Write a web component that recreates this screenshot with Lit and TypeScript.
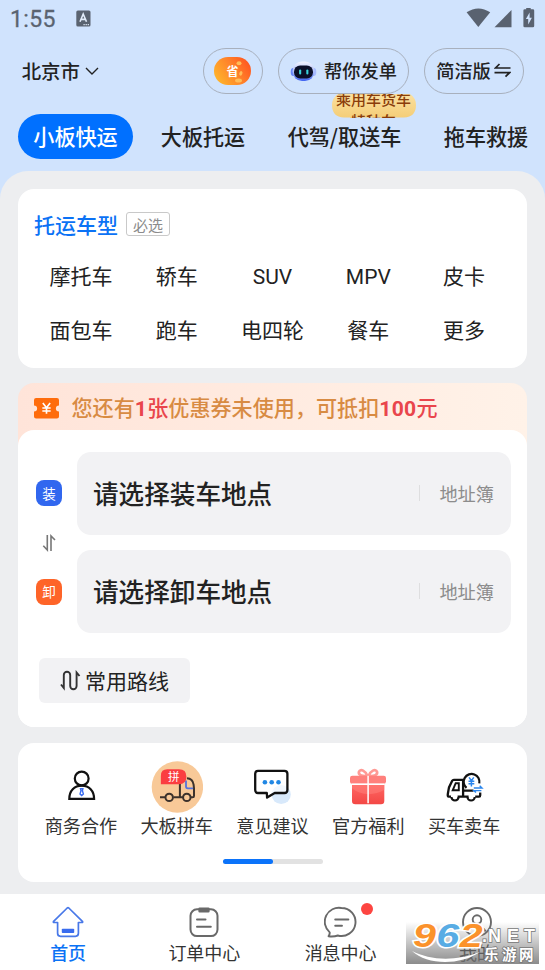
import { LitElement, html, css } from "lit";
import { customElement } from "lit/decorators.js";
import { classMap } from "lit/directives/class-map.js";

const VEHICLES = ["摩托车", "轿车", "SUV", "MPV", "皮卡", "面包车", "跑车", "电四轮", "餐车", "更多"];

const personIcon = html`<svg width="52" height="52" viewBox="-.7 0 52 52" fill="none">
  <circle cx="26" cy="17.500" r="6.900" stroke="#111" stroke-width="2.200"/>
  <path d="M13.600 37.900c0-8.200 5-13.200 12.400-13.200s12.400 5 12.400 13.200z" stroke="#111" stroke-width="2.200"/>
  <path d="M24.800 27.800h2.400l-.5 2 1 3.200-1.700 1.600-1.700-1.600 1-3.200z" stroke="#3b6df0" stroke-width="1.400"/>
</svg>`;

const carpoolIcon = html`<svg width="52" height="52" viewBox="-.4 0 52 52" fill="none">
  <circle cx="26" cy="26" r="25.700" fill="#f8c998"/>
  <path d="M8.600 36.300h5M22 36.300h9.600M28.500 22v14M35.500 17.200c4 .2 6.200 2.600 6.700 6.400l.4 3.800v7.500q0 1.400-1.400 1.400h-1.700" stroke="#3c322c" stroke-width="2"/>
  <path d="M34.600 19.500v6.100q0 1.700 1.700 1.700h5.400" stroke="#5673dc" stroke-width="1.800"/>
  <circle cx="17.800" cy="36.400" r="3.700" stroke="#3c322c" stroke-width="2"/>
  <circle cx="35.400" cy="36.400" r="3.700" stroke="#3c322c" stroke-width="2"/>
  <path d="M9.500 23.200V14.700q0-6.400 6.400-6.400h11.700q7.400 0 7.400 7.400t-7.400 7.500z" fill="#fb3d41"/>
  <text class="badge-text" x="22.300" y="19.800" text-anchor="middle" font-size="11.500" fill="#fff">拼</text>
</svg>`;

const feedbackIcon = html`<svg width="52" height="52" viewBox="0 0 52 52" fill="none">
  <circle cx="35.200" cy="33.500" r="9.600" fill="#d8e9fb"/>
  <path d="M12 9.800h26.400q3 0 3 3v16.200q0 3-3 3H28.700l-7.600 4.600-.3-4.600H12q-2.800 0-2.800-3V12.800q0-3 2.800-3z" fill="#fff" fill-opacity=".65" stroke="#111" stroke-width="2.300" stroke-linejoin="round"/>
  <circle cx="18.900" cy="21.200" r="2.300" fill="#2087e4"/><circle cx="25.700" cy="21.200" r="2.300" fill="#2087e4"/><circle cx="32.500" cy="21.200" r="2.300" fill="#2087e4"/>
</svg>`;

const giftIcon = html`<svg width="52" height="52" viewBox="0 .7 52 52" fill="none">
  <defs><linearGradient id="gift" x1="0" y1="0" x2="0" y2="1"><stop stop-color="#ff6663"/><stop offset="1" stop-color="#f34845"/></linearGradient></defs>
  <path d="M25.500 15.800c-6.500.4-9.400-1.400-8.500-4.400 1.500-3.400 6.600-1 8.500 4.400zm1 0c6.500.4 9.400-1.400 8.500-4.400-1.500-3.400-6.600-1-8.500 4.400z" stroke="#ff9a95" stroke-width="2.700"/>
  <rect x="8" y="15.400" width="36" height="8" rx="2.200" fill="#ff807c"/>
  <path d="M10 24.500h32.300v16.200q0 3.300-3.300 3.300H13.300q-3.300 0-3.300-3.300z" fill="url(#gift)"/>
  <path d="M10 28c8 7 22 8 32.300 1.500V24.500H10z" fill="#ff817c" opacity=".5"/>
  <path d="M26.100 15.500V43M10 24h32.300" stroke="#fff" stroke-width="1.500"/>
</svg>`;

const truckTradeIcon = html`<svg width="52" height="52" viewBox="0 .6 52 52" fill="none">
  <path d="M13 36.300h-2.200c-1 0-1.300-1-.9-3.200l1.100-6.100 3.200-6.600q.5-1 1.600-1h9.300v16.900M19.600 36.300h11M37.200 36.300h3.900q1.100 0 1.100-1.400v-3.100M25.100 30.200h16" stroke="#111" stroke-width="2.300"/>
  <path d="M20.800 22.800h-3.100l-3 7.100h6.100z" stroke="#111" stroke-width="1.900"/>
  <path d="M13.400 36.500a3.600 3.600 0 0 0 7.200 0M29.500 36.500a3.600 3.600 0 0 0 7.200 0" stroke="#111" stroke-width="2.200"/>
  <path d="M28.500 27.500A7.900 7.900 0 1 1 41.300 23" stroke="#111" stroke-width="2.200"/>
  <path d="M31 17l2.400 3.400 2.400-3.400M30.500 20.800h5.800M30.500 23.400h5.800M33.400 20.400v5.800" stroke="#2b86ed" stroke-width="1.500"/>
  <path d="M35.500 25.600h8.500v6.400h-8.500z" fill="#fff"/>
  <path d="M35.800 27.600h8.200l-2.300-2.200M43.400 30.200h-7.600l2.200 2" stroke="#2b86ed" stroke-width="1.400"/>
</svg>`;

const SERVICES = [
  { label: "商务合作", icon: personIcon },
  { label: "大板拼车", icon: carpoolIcon },
  { label: "意见建议", icon: feedbackIcon },
  { label: "官方福利", icon: giftIcon },
  { label: "买车卖车", icon: truckTradeIcon },
];

const homeIcon = html`<svg width="34" height="34" viewBox="0 0 34 34" fill="none">
  <path d="M16.200 3 2.600 16.300q-.8 1.200.7 1.200h3.300v10.800q0 3 3 3h14.800q3 0 3-3V17.500h3.300q1.500 0 .7-1.200L17.800 3q-.8-.6-1.600 0z" stroke="#4878e8" stroke-width="1.700" stroke-linejoin="round"/>
  <rect x="10.800" y="23.800" width="12.400" height="4.300" rx=".8" fill="#396cee"/>
</svg>`;
const orderIcon = html`<svg width="34" height="34" viewBox="0 0 34 34" fill="none" stroke="#696969" stroke-width="2" stroke-linecap="round">
  <rect x="3.500" y="4.300" width="27" height="26.800" rx="6.500"/>
  <path d="M12.600 3.700h8.800v2.600h-8.800z" fill="#696969" stroke-linejoin="round" stroke-width="2.500"/>
  <path d="M10 14.500h8.500M10 21.800h13.800"/>
</svg>`;
const messageIcon = html`<svg width="34" height="34" viewBox="0 0 34 34" fill="none" stroke="#696969" stroke-width="1.900" stroke-linecap="round" stroke-linejoin="round">
  <path d="M17.400 3a14 14 0 1 1-3.600 27.500c-2.600 1-5.500 1.200-9.300.8 1-1.500 1.400-2.400 1.200-3.900A14 14 0 0 1 17.400 3z"/>
  <path d="M11.200 14.500h13.200M11.200 20.800h6.800"/>
</svg>`;
const mineIcon = html`<svg width="34" height="34" viewBox="0 0 34 34" fill="none" stroke="#696969" stroke-width="1.900">
  <circle cx="17" cy="17" r="14"/><circle cx="17" cy="14.600" r="4.300"/><path d="M8.300 26.500a10 10 0 0 1 17.400 0"/>
</svg>`;

const NAV = [
  { label: "首页", icon: homeIcon, active: true, dot: false },
  { label: "订单中心", icon: orderIcon, active: false, dot: false },
  { label: "消息中心", icon: messageIcon, active: false, dot: true },
  { label: "我的", icon: mineIcon, active: false, dot: false },
];

@customElement("app-root")
export class AppRoot extends LitElement {
  static styles = css`
    :host {
      display: flex; flex-direction: column; position: relative; box-sizing: border-box;
      width: 545px; height: 970px; overflow: hidden; background: #d0e3fd; color: #222;
      font-family: "Noto Sans CJK SC", "Noto Sans", sans-serif; line-height: 1;
    }
    * { box-sizing: border-box; }
    svg { display: block; flex: none; }
    .status { display: flex; align-items: center; height: 37px; padding: 0 9px 0 10px; flex: none; }
    .time { font: 400 23px/37px Roboto, sans-serif; color: #5a6370; -webkit-text-stroke: .3px; letter-spacing: .4px; width: 66px; padding-top: 1px; }
    .signals { margin-left: auto; margin-top: -2px; }
    .header { display: flex; align-items: center; height: 46px; margin-top: 11px; padding: 0 21px; flex: none; }
    .city { display: flex; align-items: center; gap: 5px; font-size: 19.400px; font-weight: 500; margin-right: auto; padding-left: .7px; }
    .pill { display: flex; align-items: center; justify-content: center; height: 46px; border: 1px solid #a8b0bd; border-radius: 23px; font-size: 18.200px; font-weight: 500; white-space: nowrap; padding-bottom: 1px; }
    .save { width: 60.500px; margin-right: 15px; }
    .help { width: 131px; margin-right: 15px; gap: 7px; }
    .simple { width: 100px; gap: 3px; padding-right: 1px; }
    .tabs { display: flex; align-items: center; height: 45px; margin-top: 20px; flex: none; padding-left: 18px; font-size: 21.100px; font-weight: 500; white-space: nowrap; }
    .tab { position: relative; flex: none; display: flex; align-items: center; justify-content: center; height: 45px; }
    .tab.on { width: 115px; border-radius: 23px; background: #0070ff; color: #fff; }
    .tab.b { width: 86px; margin-left: 27px; }
    .tab.c { width: 114px; margin-left: 41.500px; }
    .tab.d { width: 86px; margin-left: 41.500px; }
    .promo { position: absolute; left: 44px; top: -20px; width: 84px; height: 24px; overflow: hidden; }
    .promo svg { position: absolute; left: 0; top: 0; }
    .promo-text { position: relative; font-size: 15px; font-weight: 500; line-height: 22px; color: #8a3d0b; text-align: center; margin-top: -6px; }
    .panel { flex: 1; margin-top: 12px; padding: 18.300px 18px 0; border-radius: 28px 28px 0 0; background: #edeef0; }
    .card { background: #fff; border-radius: 16px; }
    .vehicles { height: 178.700px; padding: 19px 15px 0; }
    .title-row { display: flex; align-items: center; height: 32px; gap: 8px; }
    .title { color: #0b72f5; font-size: 21px; font-weight: 500; padding-left: 1px; }
    .required { width: 44px; height: 24px; display: flex; align-items: center; justify-content: center; border: 1px solid #c9c9c9; border-radius: 3px; color: #8c8c8c; font-size: 15px; }
    .grid { display: grid; grid-template-columns: repeat(5, 1fr); grid-auto-rows: 54px; margin-top: 10.500px; }
    .cell { display: flex; align-items: center; justify-content: center; font-family: Roboto, "Noto Sans CJK SC", sans-serif; font-size: 21px; white-space: nowrap; }
    .coupon { margin-top: 15.400px; height: 343.800px; border-radius: 16px; background: linear-gradient(90deg, #ffe4d9, #fff2e8) top / 100% 90px no-repeat, #fff; }
    .coupon-bar { display: flex; align-items: center; height: 47px; padding: 3px 16px 0; gap: 12.500px; }
    .coupon-text { font-size: 21.100px; font-weight: 500; color: #d88b43; white-space: nowrap; }
    .red { color: #e9454c; }
    .num { font-family: Roboto, sans-serif; font-weight: 700; letter-spacing: .3px; }
    .route { height: 296.800px; border-radius: 16px; background: #fff; padding: 21.400px 15px 0; }
    .address-grid { display: grid; grid-template-columns: 32px 434px; column-gap: 12px; }
    .rail { display: flex; flex-direction: column; align-items: center; padding-top: 28.500px; }
    .tag { width: 26px; height: 26px; border-radius: 8px; color: #fff; font-size: 13.500px; display: flex; align-items: center; justify-content: center; background: #3167ef; }
    .tag.off { background: #fe6428; }
    .swap { height: 72.500px; display: flex; align-items: center; }
    .boxes { display: grid; gap: 15.500px; }
    .box { display: flex; align-items: center; height: 83px; border-radius: 14px; background: #f2f2f4; padding: 0 17px 1px 16px; }
    .place { font-size: 25.600px; font-weight: 500; margin-right: auto; }
    .book { border-left: 1px solid #dededf; color: #8c8c8c; font-size: 18.200px; padding-left: 19px; line-height: 16px; height: 16px; }
    .common { display: flex; align-items: center; justify-content: center; gap: 4px; width: 151px; height: 45px; margin: 25px 0 0 6.400px; padding: 0 1px 1px 0; border-radius: 6px; background: #f2f2f4; font-size: 21px; }
    .services { margin-top: 15.800px; height: 139px; padding: 18px 15px 0; }
    .service-row { display: grid; grid-template-columns: repeat(5, 1fr); }
    .service { display: flex; flex-direction: column; align-items: center; gap: 3px; font-size: 18.100px; color: #333; white-space: nowrap; }
    .badge-text { font-family: "Noto Sans CJK SC", sans-serif; }
    .scroll { width: 100px; height: 5px; border-radius: 3px; background: #e2e2e2; margin: 25px auto 0; }
    .thumb { width: 50px; height: 5px; border-radius: 3px; background: #0b73fa; }
    .nav { flex: none; display: grid; grid-template-columns: repeat(4, 1fr); height: 76px; background: #fff; }
    .nav-item { position: relative; display: flex; flex-direction: column; align-items: center; padding-top: 11px; gap: 4px; font-size: 18px; color: #333; }
    .nav-item.active { color: #0b72f5; font-weight: 500; }
    .dot { position: absolute; left: 88px; top: 9px; width: 12px; height: 12px; border-radius: 50%; background: #fd4541; }
    .mark { position: absolute; left: 406px; top: 922px; }
    .mark-num { font: italic 700 33px "Liberation Sans", sans-serif; }
    .mark-net { font: 700 18px "Liberation Sans", sans-serif; }
    .mark-cn { font: 700 14.500px "Noto Sans CJK SC", sans-serif; }
  `;

  private renderHeader() {
    return html`
      <div class="status">
        <div class="time">1:55</div>
        <svg width="15" height="17" viewBox="0 0 15 17"><rect x=".3" y=".5" width="14.200" height="16" rx="1.600" fill="#5a6370"/><path d="M4 11.800 7.200 4l3.300 7.800M5 9.400h4.500" fill="none" stroke="#e3edfa" stroke-width="1.600"/><path d="M7.500 14.600h1.200m.9 0h1.200m.9 0h1.200" stroke="#e3edfa" stroke-width="1.200"/></svg>
        <svg class="signals" width="70" height="22" viewBox="0 0 70 22" fill="#596270"><path d="M.6 5.200Q12.300-2.400 24.200 5.200L12.300 20.100z"/><path d="M45.500 3v17.200H28.500z"/><path d="M60.200 2.300V1h4.500v1.300h2.200q1.300 0 1.300 1.300v15.300q0 1.300-1.300 1.300h-8.200q-1.300 0-1.300-1.300V3.600q0-1.300 1.300-1.300z"/><path d="M63.600 5.500 59.900 12h2.300v5.500l3.700-6.700h-2.300z" fill="#d0e3fd"/></svg>
      </div>
      <div class="header">
        <div class="city">北京市<svg width="14" height="9" viewBox="0 0 14 9" fill="none" stroke="#222" stroke-width="1.400"><path d="m1 1 6 6 6-6"/></svg></div>
        <div class="pill save"><svg width="37" height="28" viewBox="0 0 37 28"><defs><linearGradient id="orange" x1="0" y1=".7" x2="1" y2=".2"><stop stop-color="#ffb42b"/><stop offset=".55" stop-color="#ff812a"/><stop offset="1" stop-color="#ff531f"/></linearGradient></defs><rect width="37" height="28" rx="14" fill="url(#orange)"/><g fill="#ffbd58"><ellipse cx="25" cy="6.300" rx="2.500" ry="2"/><ellipse cx="27" cy="16.400" rx="1.500" ry="2.300" transform="rotate(20 27 16)"/><ellipse cx="24.500" cy="23.500" rx="3.500" ry="2"/></g><text class="badge-text" x="18.500" y="18.600" text-anchor="middle" font-size="12" font-weight="700" fill="#fff">省</text></svg></div>
        <div class="pill help"><svg width="27" height="22" viewBox="0 0 27 22"><defs><linearGradient id="bot" x1="0" y1="0" x2="0" y2="1"><stop stop-color="#f4f6ff"/><stop offset=".55" stop-color="#a9bbfb"/><stop offset="1" stop-color="#3e62f2"/></linearGradient></defs><ellipse cx="3.200" cy="12" rx="2.500" ry="4" fill="#6686fa"/><ellipse cx="23.800" cy="12" rx="2.500" ry="4" fill="#a6baff"/><rect x="2.500" y="1.500" width="22" height="19.500" rx="9.500" fill="url(#bot)"/><rect x="4" y="5.500" width="19" height="13" rx="6.200" fill="#0b1028"/><rect x="9.100" y="9.500" width="2.100" height="5" rx="1" fill="#39d5dc"/><rect x="16.300" y="9.500" width="2.100" height="5" rx="1" fill="#39d5dc"/></svg>帮你发单</div>
        <div class="pill simple">简洁版<svg width="17" height="15" viewBox="0 0 17 15" fill="none" stroke="#222" stroke-width="1.700"><path d="M5.500 1 1.500 5h15M.5 9.700H15.500l-4 4"/></svg></div>
      </div>
      <div class="tabs">
        <div class="tab on">小板快运</div>
        <div class="tab b">大板托运</div>
        <div class="tab c">代驾/取送车
          <div class="promo">
            <svg width="84" height="27" viewBox="0 0 84 27"><defs><linearGradient id="gold" x1="0" y1="0" x2="0" y2="1"><stop stop-color="#fbe0a0"/><stop offset="1" stop-color="#f3cb72"/></linearGradient></defs><path d="M6 0h72q6 4 6 11 0 12-12 12.500H23L18.500 27l-.5-3.500h-6Q0 23 0 11 0 4 6 0z" fill="url(#gold)"/></svg>
            <div class="promo-text">乘用车货车<br>特种车</div>
          </div>
        </div>
        <div class="tab d">拖车救援</div>
      </div>`;
  }

  private renderBox(place: string) {
    return html`<div class="box"><div class="place">${place}</div><div class="book">地址簿</div></div>`;
  }

  render() {
    return html`
      ${this.renderHeader()}
      <div class="panel">
        <div class="card vehicles">
          <div class="title-row"><div class="title">托运车型</div><div class="required">必选</div></div>
          <div class="grid">${VEHICLES.map((v) => html`<div class="cell">${v}</div>`)}</div>
        </div>
        <div class="coupon">
          <div class="coupon-bar">
            <svg width="25" height="21" viewBox="0 0 24 21" preserveAspectRatio="none"><path d="M2 0h20q2 0 2 2v5.500a3 3 0 0 0 0 6V18.500q0 2-2 2H2q-2 0-2-2v-5a3 3 0 0 0 0-6V2q0-2 2-2z" fill="#fe6c0c"/><path d="m8.500 5 3.500 4.700L15.500 5M8 10h8M8 13h8M12 9.500v6.300" fill="none" stroke="#fff" stroke-width="1.600"/></svg>
            <div class="coupon-text">您还有<span class="red"><span class="num">1</span>张</span>优惠券未使用，可抵扣<span class="red"><span class="num">100</span>元</span></div>
          </div>
          <div class="route">
            <div class="address-grid">
              <div class="rail">
                <div class="tag">装</div>
                <div class="swap"><svg width="16" height="18" viewBox="0 0 16 18" fill="none" stroke="#777" stroke-width="1.600"><path d="M6.300 1v15L2.300 11.800M10 17V2l4 4"/></svg></div>
                <div class="tag off">卸</div>
              </div>
              <div class="boxes">${this.renderBox("请选择装车地点")}${this.renderBox("请选择卸车地点")}</div>
            </div>
            <div class="common"><svg width="21" height="21" viewBox="0 0 21 21" fill="none" stroke="#333" stroke-width="1.900"><path d="M1 14.500 3.800 18V5a3.200 3.200 0 0 1 6.400 0v11a3.200 3.200 0 0 0 6.400 0V2.500L19.500 6"/></svg>常用路线</div>
          </div>
        </div>
        <div class="card services">
          <div class="service-row">${SERVICES.map((s) => html`<div class="service">${s.icon}<span>${s.label}</span></div>`)}</div>
          <div class="scroll"><div class="thumb"></div></div>
        </div>
      </div>
      <div class="nav">
        ${NAV.map((n) => html`<div class=${classMap({ "nav-item": true, active: n.active })}>${n.icon}<span>${n.label}</span>${n.dot ? html`<div class="dot"></div>` : ""}</div>`)}
      </div>
      <svg class="mark" width="133" height="42" viewBox="0 0 133 42">
        <defs><linearGradient id="shade" x1="0" y1="0" x2="0" y2="1"><stop stop-color="#777" stop-opacity="0"/><stop offset="1" stop-color="#777" stop-opacity=".85"/></linearGradient></defs>
        <rect width="133" height="42" fill="url(#shade)"/>
        <path d="M6 29c18 9 42 11 68 1-21 14-53 13-68-1z" fill="#fff"/>
        <g class="mark-num" transform="translate(7 25) scale(1.250 1)"><g stroke="#fff" stroke-width="3"><text>9</text><text x="18.700">6</text><text x="37.500">2</text></g><g fill="#fb922b"><text>9</text><text x="18.700" fill="#58ace4">6</text><text x="37.500">2</text></g></g>
        <g fill="#fff" stroke="#777" stroke-width="1.500" paint-order="stroke">
          <text class="mark-net" y="19.500"><tspan x="76">.</tspan><tspan x="82">N</tspan><tspan x="101">E</tspan><tspan x="118">T</tspan></text>
          <text class="mark-cn" y="38"><tspan x="78">乐</tspan><tspan x="96">游</tspan><tspan x="113">网</tspan></text>
        </g>
      </svg>`;
  }
}
